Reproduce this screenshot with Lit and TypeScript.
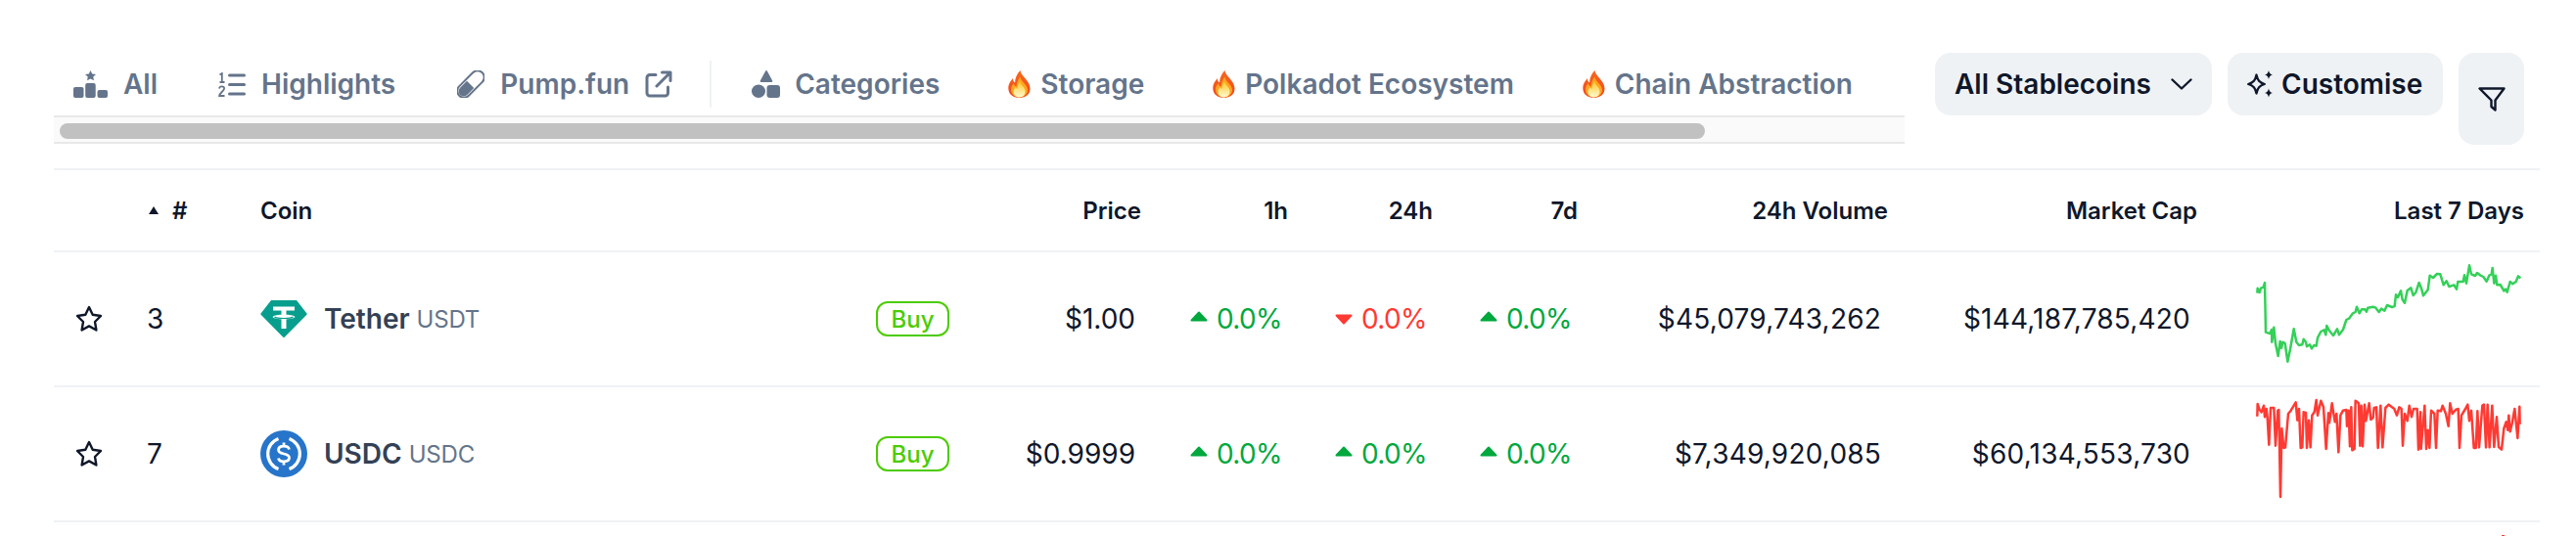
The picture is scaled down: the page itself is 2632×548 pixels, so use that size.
import { LitElement, html, css, svg } from "lit";
import { customElement } from "lit/decorators.js";

const GREEN: number[][] = [[77,150],[78,135],[84,148],[88,135],[96,132],[100,118],[103,270],[110,272],[116,274],[121,262],[122,300],[128,255],[133,305],[141,343],[147,298],[151,318],[155,300],[162,304],[170,360],[178,322],[189,260],[197,300],[205,310],[215,308],[219,291],[226,300],[229,314],[238,308],[244,320],[251,310],[258,312],[262,287],[272,268],[282,263],[287,278],[290,250],[297,264],[310,280],[322,260],[328,278],[340,262],[350,232],[358,228],[370,212],[378,208],[382,192],[390,212],[397,200],[407,200],[412,207],[416,195],[432,192],[440,195],[450,208],[457,198],[467,204],[475,187],[490,193],[498,190],[502,155],[508,163],[517,143],[522,170],[529,180],[537,142],[548,134],[555,157],[563,148],[573,118],[580,135],[586,158],[600,140],[606,96],[616,103],[628,91],[638,92],[648,125],[657,113],[665,130],[680,125],[688,138],[692,115],[708,115],[712,95],[718,120],[727,65],[733,92],[745,97],[751,88],[760,95],[770,100],[780,114],[788,96],[795,92],[798,73],[803,120],[808,96],[812,125],[822,124],[833,143],[838,138],[843,147],[852,115],[860,122],[870,115],[877,98],[884,104]];
const RED: number[][] = [[77,108],[78,70],[84,88],[90,95],[97,75],[100,110],[105,85],[108,110],[113,195],[118,82],[128,82],[133,198],[140,90],[143,88],[148,355],[152,145],[158,205],[163,203],[172,100],[180,90],[195,65],[200,120],[205,85],[210,205],[215,203],[219,95],[226,97],[229,205],[235,120],[240,203],[245,105],[252,95],[258,58],[262,105],[272,60],[280,80],[288,208],[295,98],[298,128],[306,68],[315,125],[320,100],[326,218],[332,105],[340,90],[350,88],[352,138],[357,90],[361,200],[365,80],[368,212],[375,208],[378,60],[388,68],[392,198],[396,75],[400,200],[406,72],[410,122],[420,68],[425,118],[432,112],[435,82],[442,80],[447,205],[455,75],[461,203],[470,82],[480,72],[490,80],[497,85],[505,105],[512,80],[519,85],[523,198],[529,100],[537,122],[543,75],[550,110],[556,85],[567,85],[571,210],[577,95],[579,208],[590,75],[595,208],[600,150],[605,205],[610,90],[620,100],[625,205],[630,90],[640,92],[645,75],[655,100],[663,138],[668,68],[675,100],[685,88],[693,85],[697,205],[703,105],[715,85],[722,72],[727,122],[733,90],[741,205],[747,205],[752,92],[757,203],[767,75],[772,72],[778,203],[783,72],[789,203],[797,75],[803,202],[811,110],[817,202],[826,210],[833,145],[840,125],[845,150],[848,105],[852,155],[858,130],[866,85],[875,175],[881,78],[882,132]];

const iconAll = html`<svg class="ic" width="35" height="28" viewBox="0 0 35 28" fill="#64748b"><path d="M17.500 0l1.700 3.400 3.800.5-2.700 2.600.6 3.700-3.400-1.800-3.400 1.800.6-3.700L12 3.900l3.800-.5z"/><rect x="0" y="17" width="10.500" height="11" rx="2"/><rect x="12.200" y="13" width="10.500" height="15" rx="2"/><rect x="24.500" y="20" width="10.500" height="8" rx="2"/></svg>`;
const iconHighlights = html`<svg class="ic" width="28" height="25" viewBox="0 0 28 25" fill="none" stroke="#64748b"><path d="M11.500 3h15M11.500 12.500h15M11.500 22h15" stroke-width="3" stroke-linecap="round"/><path d="M1.500 2.500L3.800 1v9M1.500 10h5" stroke-width="1.800"/><path d="M1 16.500c.3-1.600 1.400-2.200 2.600-2.200 1.400 0 2.500.9 2.500 2.200 0 2.400-4.600 4.200-5 7.500h5.400" stroke-width="1.800"/></svg>`;
const iconPill = html`<svg class="ic" width="28" height="28" viewBox="0 0 28 28"><g transform="rotate(45 14 14)"><rect x="7.200" y="-2.600" width="13.600" height="33.200" rx="6.800" fill="none" stroke="#64748b" stroke-width="2"/><path d="M8.900 14.500h10.200v9.800a5.100 5.100 0 0 1-10.200 0z" fill="#64748b"/></g></svg>`;
const iconExt = html`<svg class="ext" width="28" height="28" viewBox="0 0 28 28" fill="none" stroke="#64748b" stroke-width="3" stroke-linecap="round" stroke-linejoin="round"><path d="M11 4.500H5a3 3 0 0 0-3 3V23a3 3 0 0 0 3 3h15.500a3 3 0 0 0 3-3v-6"/><path d="M12 16L26 2M17.500 2H26v8.500"/></svg>`;
const iconCat = html`<svg class="ic" width="29" height="28" viewBox="0 0 29 28" fill="#64748b"><path d="M15.800 .6a.9.9 0 0 0-1.600 0L8.800 10.600c-.4.700.1 1.400.8 1.400h10.800c.7 0 1.200-.7.800-1.400z"/><ellipse cx="7" cy="21.300" rx="7" ry="6.700"/><rect x="15.500" y="15" width="13.500" height="13" rx="3"/></svg>`;
const iconFire = html`<svg class="fire" width="23" height="28" viewBox="0 0 23 28"><defs><linearGradient id="fo" x1="0" y1="0" x2="0" y2="1"><stop offset="0" stop-color="#f6691f"/><stop offset="1" stop-color="#f2451c"/></linearGradient><linearGradient id="fi" x1="0" y1="0" x2="0" y2="1"><stop offset="0" stop-color="#ffc62b"/><stop offset="1" stop-color="#fffbd0"/></linearGradient></defs><path d="M12.500 0c.6 6 9.700 10 10 18.200C22.800 24 18 28 11.500 28S.3 24 .3 18.200C.3 13.500 3 10.500 5 8c0 2.500.8 3.800 2.200 4.500C7 8 9.500 3 12.500 0z" fill="url(#fo)"/><path d="M12.500 6.500c.5 5 7.200 8 7.500 13C20.200 24 16.500 27.500 11.500 27.500S3 24 3 19.500c0-3 1.500-5 3-6.500 0 2 1 3 2.500 3.500.2-3.500 1.500-7 4-10z" fill="#ffa51f"/><path d="M12 11c.4 3.500 5.500 6 5.500 10.800 0 3.400-2.800 5.700-6 5.700s-6-2.500-6-5.500c0-2.300 1.200-4 2.500-5 .3 1.200.8 1.700 1.500 2 0-3 1.100-6 2.500-8z" fill="url(#fi)"/></svg>`;
const iconChevron = html`<svg width="22" height="12" viewBox="0 0 22 12" fill="none" stroke="#0f172a" stroke-width="2.400" stroke-linecap="round" stroke-linejoin="round"><path d="M1.500 1.500L11 10.500l9.500-9"/></svg>`;
const iconSparkle = html`<svg width="28" height="28" viewBox="0 0 28 28"><path d="M9.500 4.500c1.200 5.600 3 7.800 8.300 9.500-5.300 1.700-7.100 3.900-8.300 9.500-1.200-5.600-3-7.800-8.300-9.500 5.300-1.700 7.100-3.900 8.300-9.500z" fill="none" stroke="#0f172a" stroke-width="2.300" stroke-linejoin="round"/><path d="M22 0c.6 2.700 1.600 3.800 4 4.500-2.400.7-3.400 1.800-4 4.500-.6-2.700-1.600-3.800-4-4.500 2.400-.7 3.400-1.800 4-4.500zM22 18.500c.6 2.700 1.600 3.800 4 4.500-2.400.7-3.400 1.800-4 4.500-.6-2.700-1.600-3.800-4-4.500 2.400-.7 3.400-1.800 4-4.500z" fill="#0f172a"/></svg>`;
const iconFilter = html`<svg width="28" height="25" viewBox="0 0 28 25" fill="none" stroke="#0f172a" stroke-width="2.400" stroke-linejoin="round"><path d="M1.500 1.500h25L17.500 13.500v10l-4-3.500v-6.500z"/></svg>`;
const iconStar = html`<svg class="star" width="28" height="28" viewBox="0 0 28 28"><path d="M14 2l3.700 7.800 8.300 1.200-6 6 1.400 8.500L14 21.400l-7.400 4.100L8 17l-6-6 8.300-1.200z" fill="none" stroke="#0f172a" stroke-width="2.400" stroke-linejoin="round"/></svg>`;
const logoTether = html`<svg width="48" height="40" viewBox="0 0 48 40"><path d="M11 1h26l10.500 13.500a1 1 0 0 1-.1 1.300L24.700 38.800a1 1 0 0 1-1.400 0L.6 15.800a1 1 0 0 1-.1-1.300z" fill="#089e8e"/><path d="M13 7.500h22v4H26.500v4.200c4.600.2 8.800 1.100 8.800 2.300s-4.200 2.100-8.800 2.300V30h-5V20.300c-4.600-.2-8.800-1.100-8.800-2.300s4.200-2.100 8.800-2.300v-4.200H13z" fill="#fff"/><path d="M14.500 18c1 .9 5 1.500 9.500 1.500s8.500-.6 9.500-1.500" fill="none" stroke="#089e8e" stroke-width="1.200"/></svg>`;
const logoUsdc = html`<svg width="48" height="48" viewBox="0 0 48 48"><circle cx="24" cy="24" r="24" fill="#2775ca"/><path d="M18.500 8.500a16.500 16.500 0 0 0 0 31M29.500 8.500a16.500 16.500 0 0 1 0 31" fill="none" stroke="#fff" stroke-width="3.200"/><path d="M29.500 19.500c-.5-2.200-2.700-3.300-5.500-3.300-3.200 0-5.500 1.500-5.500 3.900s2.200 3.200 5.500 3.900 5.500 1.600 5.500 4c0 2.400-2.300 3.800-5.500 3.800-3 0-5.100-1.200-5.500-3.400M24 12.500v3.700M24 31.800v3.700" fill="none" stroke="#fff" stroke-width="2.800"/></svg>`;

function spark(points: number[][], color: string, y0: number) {
  const pts = points.map((p) => p.join(",")).join(" ");
  return html`<svg class="spark" width="273.33" height="133.33" viewBox="70 ${y0} 820 400">${svg`<polyline points=${pts} fill="none" stroke=${color} stroke-width="7.500" stroke-linejoin="round"/>`}</svg>`;
}

const caret = (up: boolean) => html`<svg class="tri ${up ? "tu" : "td"}" width="18" height="11" viewBox="0 0 18 11"><path d=${up ? "M9 1.500L16.500 9.500H1.500z" : "M9 9.500L16.500 1.500H1.500z"} fill="currentColor" stroke="currentColor" stroke-width="2" stroke-linejoin="round"/></svg>`;
const pct = (up: boolean) => html`<div class="num pct ${up ? "up" : "down"}">${caret(up)}0.0%</div>`;

@customElement("app-root")
export class AppRoot extends LitElement {
  static styles = css`
    :host { display: block; font-family: Inter, "Noto Sans", sans-serif; color: #0f172a; background: #fff; }
    .page { padding-left: 55px; width: 2540px; }
    .top { display: flex; align-items: flex-start; padding: 54px 0 24px 0; }
    .tabscroll { width: 1891px; flex: none; }
    .tabs { display: flex; align-items: center; height: 64px; padding-left: 20px; white-space: nowrap; font-size: 28px; font-weight: 600; color: #64748b; }
    .tab { display: flex; align-items: center; padding-right: 63px; }
    .tab.first { padding-right: 62px; }
    .tab .ic { margin-right: 16px; flex: none; }
    .tab .ext { margin-left: 16px; flex: none; }
    .tab .fire { margin-right: 10px; flex: none; }
    .tab.hot { padding-left: 7px; }
    .tab.pump { padding-right: 38px; }
    .tab.cat .ic { margin-right: 15px; }
    .divider { width: 2px; height: 48px; background: #eff2f5; margin-right: 41px; flex: none; }
    .track { height: 29px; box-sizing: border-box; background: #fafafa; border-top: 2px solid #e8e8e8; border-bottom: 2px solid #e8e8e8; padding: 6px 0 0 6px; }
    .thumb { width: 1681px; height: 16px; background: #c1c1c1; border-radius: 8px; }
    .actions { display: flex; gap: 16px; margin-left: 31px; align-items: flex-start; flex: none; }
    .btn { display: flex; align-items: center; box-sizing: border-box; height: 64px; border-radius: 16px; background: #eff2f5; font-size: 28px; font-weight: 600; color: #0f172a; white-space: nowrap; }
    .btn.sel { width: 283px; padding-left: 20px; gap: 20px; }
    .btn.cust { width: 220px; padding-left: 20px; gap: 7px; }
    .btn.filt { width: 67px; height: 94px; justify-content: center; }
    .row { display: grid; grid-template-columns: 97px 114px 704px 196px 150px 148px 148px 317px 316px 334px; border-bottom: 2px solid #eff2f5; padding-right: 16px; align-items: center; }
    .row > * { min-width: 0; }
    .head { height: 86px; box-sizing: border-box; border-top: 2px solid #eff2f5; font-size: 24px; font-weight: 600; color: #0f172a; }
    .body { height: 138px; box-sizing: border-box; font-size: 28px; font-weight: 400; color: #0f172a; }
    .num { text-align: right; }
    .body .num { padding-right: 6px; }
    .body .vol { padding-right: 7px; letter-spacing: .2px; }
    .rankh { display: flex; align-items: center; gap: 14px; }
    .rank { margin-left: -2px; }
    .sort { width: 0; height: 0; border-left: 5px solid transparent; border-right: 5px solid transparent; border-bottom: 8px solid #0f172a; }
    .starcell { padding-left: 22px; display: flex; }
    .coin { display: flex; align-items: center; }
    .logo { width: 48px; display: flex; justify-content: center; margin-right: 17px; }
    .name { font-weight: 600; color: #334155; }
    .sym { font-size: 24px; color: #64748b; margin-left: 7px; letter-spacing: -.2px; }
    .buy { margin-left: auto; box-sizing: border-box; width: 75px; height: 36px; border: 2px solid #4bcc00; border-radius: 12px; color: #4bcc00; font-size: 24px; font-weight: 500; display: flex; align-items: center; justify-content: center; }
    .pct { display: flex; justify-content: flex-end; align-items: center; gap: 9px; letter-spacing: -.6px; }
    .up { color: #00a83e; }
    .down { color: #ff3a33; }
    .tri { display: block; flex: none; }
    .tu { margin-bottom: 5px; }
    .td { margin-bottom: -1px; }
    .chart { display: flex; justify-content: flex-end; padding-right: 2px; }
    .spark { display: block; }
    .peek { width: 3px; height: 1px; background: #ff3a33; margin: 13px 0 0 2501px; }
  `;

  render() {
    return html`<div class="page">
      <div class="top">
        <div class="tabscroll">
          <div class="tabs">
            <div class="tab first">${iconAll}All</div>
            <div class="tab">${iconHighlights}Highlights</div>
            <div class="tab pump">${iconPill}Pump.fun${iconExt}</div>
            <div class="divider"></div>
            <div class="tab cat">${iconCat}Categories</div>
            <div class="tab hot">${iconFire}Storage</div>
            <div class="tab hot">${iconFire}Polkadot Ecosystem</div>
            <div class="tab hot">${iconFire}Chain Abstraction</div>
          </div>
          <div class="track"><div class="thumb"></div></div>
        </div>
        <div class="actions">
          <div class="btn sel">All Stablecoins ${iconChevron}</div>
          <div class="btn cust">${iconSparkle}Customise</div>
          <div class="btn filt">${iconFilter}</div>
        </div>
      </div>
      <div class="row head">
        <div></div>
        <div class="rankh"><i class="sort"></i>#</div>
        <div>Coin</div>
        <div class="num">Price</div>
        <div class="num">1h</div>
        <div class="num">24h</div>
        <div class="num">7d</div>
        <div class="num">24h Volume</div>
        <div class="num">Market Cap</div>
        <div class="num">Last 7 Days</div>
      </div>
      <div class="row body">
        <div class="starcell">${iconStar}</div>
        <div class="rank">3</div>
        <div class="coin"><span class="logo">${logoTether}</span><span class="name">Tether</span><span class="sym">USDT</span><span class="buy">Buy</span></div>
        <div class="num">$1.00</div>
        ${pct(true)}
        ${pct(false)}
        ${pct(true)}
        <div class="num vol">$45,079,743,262</div>
        <div class="num vol">$144,187,785,420</div>
        <div class="chart">${spark(GREEN, "#34d058", 28)}</div>
      </div>
      <div class="row body">
        <div class="starcell">${iconStar}</div>
        <div class="rank">7</div>
        <div class="coin"><span class="logo">${logoUsdc}</span><span class="name">USDC</span><span class="sym">USDC</span><span class="buy">Buy</span></div>
        <div class="num">$0.9999</div>
        ${pct(true)}
        ${pct(true)}
        ${pct(true)}
        <div class="num vol">$7,349,920,085</div>
        <div class="num vol">$60,134,553,730</div>
        <div class="chart">${spark(RED, "#ff3a33", 22)}</div>
      </div>
      <div class="peek"></div>
    </div>`;
  }
}
